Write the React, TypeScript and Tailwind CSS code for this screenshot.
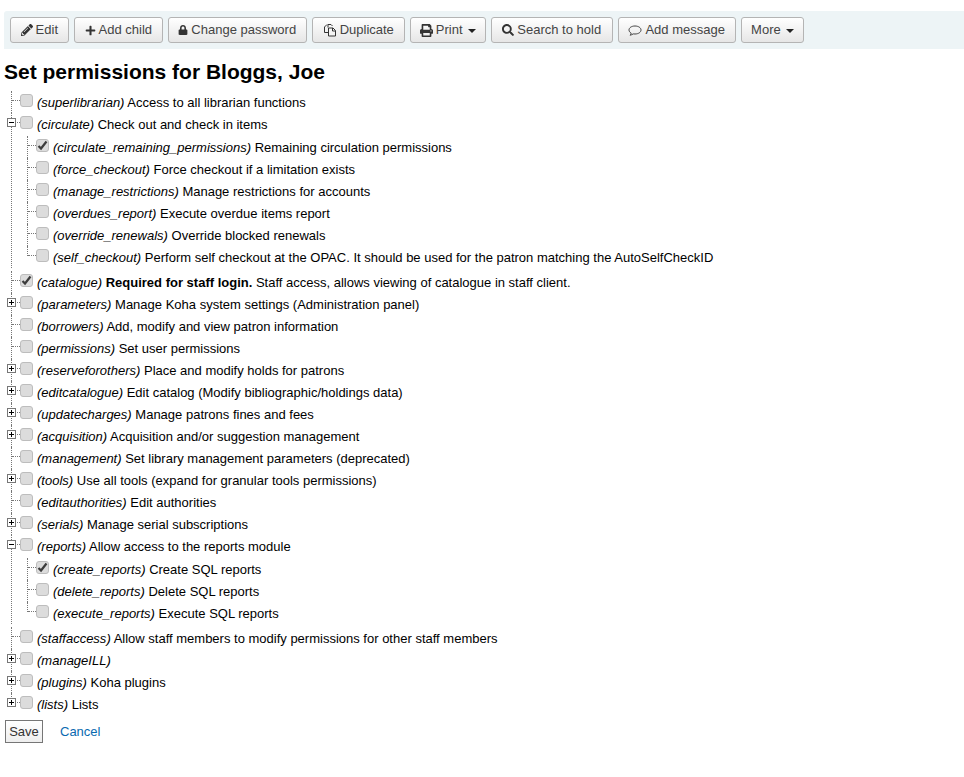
import React from "react";
import { FaPencilAlt, FaPlus, FaLock, FaPrint, FaSearch } from "react-icons/fa";

type Node = { code: string; text?: React.ReactNode; checked?: boolean; state?: "plus" | "minus"; children?: Node[] };

const tree: Node[] = [
  { code: "superlibrarian", text: "Access to all librarian functions" },
  {
    code: "circulate", text: "Check out and check in items", state: "minus",
    children: [
      { code: "circulate_remaining_permissions", text: "Remaining circulation permissions", checked: true },
      { code: "force_checkout", text: "Force checkout if a limitation exists" },
      { code: "manage_restrictions", text: "Manage restrictions for accounts" },
      { code: "overdues_report", text: "Execute overdue items report" },
      { code: "override_renewals", text: "Override blocked renewals" },
      { code: "self_checkout", text: "Perform self checkout at the OPAC. It should be used for the patron matching the AutoSelfCheckID" },
    ],
  },
  { code: "catalogue", checked: true, text: <><b>Required for staff login.</b> Staff access, allows viewing of catalogue in staff client.</> },
  { code: "parameters", text: "Manage Koha system settings (Administration panel)", state: "plus" },
  { code: "borrowers", text: "Add, modify and view patron information" },
  { code: "permissions", text: "Set user permissions" },
  { code: "reserveforothers", text: "Place and modify holds for patrons", state: "plus" },
  { code: "editcatalogue", text: "Edit catalog (Modify bibliographic/holdings data)", state: "plus" },
  { code: "updatecharges", text: "Manage patrons fines and fees", state: "plus" },
  { code: "acquisition", text: "Acquisition and/or suggestion management", state: "plus" },
  { code: "management", text: "Set library management parameters (deprecated)" },
  { code: "tools", text: "Use all tools (expand for granular tools permissions)", state: "plus" },
  { code: "editauthorities", text: "Edit authorities" },
  { code: "serials", text: "Manage serial subscriptions", state: "plus" },
  {
    code: "reports", text: "Allow access to the reports module", state: "minus",
    children: [
      { code: "create_reports", text: "Create SQL reports", checked: true },
      { code: "delete_reports", text: "Delete SQL reports" },
      { code: "execute_reports", text: "Execute SQL reports" },
    ],
  },
  { code: "staffaccess", text: "Allow staff members to modify permissions for other staff members" },
  { code: "manageILL", state: "plus" },
  { code: "plugins", text: "Koha plugins", state: "plus" },
  { code: "lists", text: "Lists", state: "plus" },
];

function Check({ checked }: { checked?: boolean }) {
  return (
    <span className="flex h-[13px] w-[13px] shrink-0 items-center justify-center rounded-[3px] border border-[#bdbdbd] bg-[#dcdcdc]">
      {checked && (
        <svg width="11" height="11" viewBox="0 0 11 11">
          <path d="M1.5 6 L4 8.5 L9.500 1.500" fill="none" stroke="#3c3c3c" strokeWidth="2.2" />
        </svg>
      )}
    </span>
  );
}

function Toggle({ state }: { state: "plus" | "minus" }) {
  return (
    <span className="absolute left-[-5px] top-[5px] flex h-[9px] w-[9px] items-center justify-center border border-[#777] bg-white">
      <svg width="7" height="7" viewBox="0 0 7 7">
        <path d={state === "plus" ? "M1 3.5H6M3.5 1V6" : "M1 3.5H6"} stroke="#000" strokeWidth="1" />
      </svg>
    </span>
  );
}

function Item({ node, last }: { node: Node; last: boolean }) {
  return (
    <li className={"relative " + (last ? "pl-px" : "border-l border-dotted border-[#777]")}>
      {last && <span className="absolute left-0 top-0 h-[10px] border-l border-dotted border-[#777]" />}
      <div className="relative flex h-[22px] items-start">
        <span className="mt-[9px] h-0 w-[8px] shrink-0 border-t border-dotted border-[#777]" />
        {node.state && <Toggle state={node.state} />}
        <span className="mt-[3px]"><Check checked={node.checked} /></span>
        <span className="ml-[4px] whitespace-nowrap pt-[1px] leading-[22px]">
          <i>({node.code})</i>{node.text ? " " : ""}{node.text}
        </span>
      </div>
      {node.children && (
        <ul className="mb-[3px] ml-[15px] mt-[1px]">
          {node.children.map((c, i) => (
            <Item key={c.code} node={c} last={i === node.children!.length - 1} />
          ))}
        </ul>
      )}
    </li>
  );
}

function Btn({ icon, label, caret, className }: { icon?: React.ReactNode; label: string; caret?: boolean; className: string }) {
  return (
    <button className={"flex h-[26px] shrink-0 items-center justify-center gap-[3px] rounded-[3px] border border-[#b4b4b4] bg-gradient-to-b from-white to-[#e6e6e6] text-[13px] text-[#444] " + className}>
      {icon}
      <span>{label}</span>
      {caret && <span className="ml-[2px] mt-[1px] h-0 w-0 border-x-[4px] border-t-[4px] border-x-transparent border-t-[#222]" />}
    </button>
  );
}

function CopyIcon() {
  return (
    <svg width="14" height="14" viewBox="0 0 14 14" fill="none" stroke="#333" strokeWidth="1">
      <path d="M5 4.5V1.5H8L9.5 3M5.5 9.5H1.5V4L4 1.5" />
      <path d="M5.5 5H10L12.5 7.5V13H5.5Z" fill="#f4f4f4" />
      <path d="M9.5 5V8H12.5" />
    </svg>
  );
}

function CommentIcon() {
  return (
    <svg width="14" height="13" viewBox="0 0 14 13" fill="none" stroke="#444" strokeWidth="1">
      <path d="M7 2C3.6 2 1 3.7 1 6C1 7.3 1.9 8.4 3.2 9.1C3.1 9.9 2.6 10.7 2 11.2C3.3 11 4.4 10.5 5.2 9.9C5.8 10 6.4 10 7 10C10.4 10 13 8.3 13 6C13 3.7 10.4 2 7 2Z" />
    </svg>
  );
}

export default function App() {
  return (
    <div className="min-h-[777px] bg-white text-[13px] text-black" style={{ fontFamily: '"Liberation Sans", Arial, sans-serif' }}>
      <div className="h-[11px]" />
      <div className="ml-[4px] flex h-[38px] items-center gap-[5.4px] rounded-tl-[3px] bg-[#edf4f6] pl-[6px]">
        <Btn className="w-[58.6px]" icon={<FaPencilAlt size={12} color="#333" />} label="Edit" />
        <Btn className="w-[88.6px]" icon={<FaPlus size={11} color="#333" />} label="Add child" />
        <Btn className="w-[138.6px]" icon={<FaLock size={10} color="#333" />} label="Change password" />
        <Btn className="w-[92.6px]" icon={<CopyIcon />} label="Duplicate" />
        <Btn className="w-[75.6px]" icon={<FaPrint size={13} color="#333" />} label="Print" caret />
        <Btn className="w-[121.6px]" icon={<FaSearch size={12} color="#333" />} label="Search to hold" />
        <Btn className="w-[117.6px]" icon={<CommentIcon />} label="Add message" />
        <Btn className="w-[63px]" label="More" caret />
      </div>
      <h1 className="ml-[4px] mt-[9px] text-[21px] font-bold leading-[27px]">Set permissions for Bloggs, Joe</h1>
      <ul className="ml-[11px] mt-[6px]">
        {tree.map((n, i) => (
          <Item key={n.code} node={n} last={i === tree.length - 1} />
        ))}
      </ul>
      <div className="ml-[5px] mt-[5px] flex items-center">
        <button className="h-[23px] w-[38px] border border-[#767676] bg-gradient-to-b from-white to-[#eeeeee] text-[13px] text-[#333]">Save</button>
        <a className="ml-[17px] text-[#0a6ab0]">Cancel</a>
      </div>
    </div>
  );
}
